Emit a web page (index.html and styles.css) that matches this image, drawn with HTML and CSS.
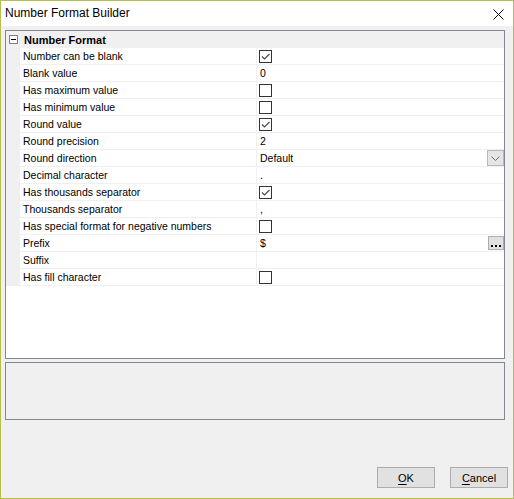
FILE: index.html
```html
<!DOCTYPE html>
<html>
<head>
<meta charset="utf-8">
<link rel="stylesheet" href="styles.css">
</head>
<body>
<div class="window">
  <div class="titlebar">
    <span class="title">Number Format Builder</span>
    <svg class="close" width="11" height="11" viewBox="0 0 11 11"><path d="M0.5 0.5 L10.5 10.5 M10.5 0.5 L0.5 10.5" stroke="#000" stroke-width="1" fill="none"/></svg>
  </div>
  <div class="grid">
    <div class="category">
      <span class="toggle"><span class="minus"></span></span>
      <span class="cat-label">Number Format</span>
    </div>
    <div class="row"><div class="gutter"></div><div class="name">Number can be blank</div><div class="value"><span class="check on"><svg width="11" height="11" viewBox="0 0 11 11"><path d="M2 5.5 L4.5 8 L9.5 3" stroke="#4a4a4a" stroke-width="1.2" fill="none"/></svg></span></div></div>
    <div class="row"><div class="gutter"></div><div class="name">Blank value</div><div class="value"><span class="text">0</span></div></div>
    <div class="row"><div class="gutter"></div><div class="name">Has maximum value</div><div class="value"><span class="check"></span></div></div>
    <div class="row"><div class="gutter"></div><div class="name">Has minimum value</div><div class="value"><span class="check"></span></div></div>
    <div class="row"><div class="gutter"></div><div class="name">Round value</div><div class="value"><span class="check on"><svg width="11" height="11" viewBox="0 0 11 11"><path d="M2 5.5 L4.5 8 L9.5 3" stroke="#4a4a4a" stroke-width="1.2" fill="none"/></svg></span></div></div>
    <div class="row"><div class="gutter"></div><div class="name">Round precision</div><div class="value"><span class="text">2</span></div></div>
    <div class="row"><div class="gutter"></div><div class="name">Round direction</div><div class="value"><span class="text">Default</span><span class="dropbtn"><svg width="9" height="5" viewBox="0 0 9 5"><path d="M0.5 0.5 L4.5 4.5 L8.5 0.5" stroke="#6d6d6d" stroke-width="1" fill="none"/></svg></span></div></div>
    <div class="row"><div class="gutter"></div><div class="name">Decimal character</div><div class="value"><span class="text">.</span></div></div>
    <div class="row"><div class="gutter"></div><div class="name">Has thousands separator</div><div class="value"><span class="check on"><svg width="11" height="11" viewBox="0 0 11 11"><path d="M2 5.5 L4.5 8 L9.5 3" stroke="#4a4a4a" stroke-width="1.2" fill="none"/></svg></span></div></div>
    <div class="row"><div class="gutter"></div><div class="name">Thousands separator</div><div class="value"><span class="text">,</span></div></div>
    <div class="row"><div class="gutter"></div><div class="name">Has special format for negative numbers</div><div class="value"><span class="check"></span></div></div>
    <div class="row"><div class="gutter"></div><div class="name">Prefix</div><div class="value"><span class="text">$</span><span class="ellbtn"><svg width="10" height="2" viewBox="0 0 10 2"><rect x="0" y="0" width="2" height="2" fill="#000"/><rect x="4" y="0" width="2" height="2" fill="#000"/><rect x="8" y="0" width="2" height="2" fill="#000"/></svg></span></div></div>
    <div class="row"><div class="gutter"></div><div class="name">Suffix</div><div class="value"></div></div>
    <div class="row"><div class="gutter"></div><div class="name">Has fill character</div><div class="value"><span class="check"></span></div></div>
  </div>
  <div class="help"></div>
  <div class="buttons">
    <button class="btn"><u>O</u>K</button>
    <button class="btn"><u>C</u>ancel</button>
  </div>
</div>
</body>
</html>
```
FILE: styles.css
```css
html, body {
  margin: 0;
  padding: 0;
  background: #f0f0f0;
}
.window {
  width: 514px;
  height: 499px;
  box-sizing: border-box;
  border: 1px solid #b4c04a;
  background: #f0f0f0;
  display: flex;
  flex-direction: column;
  font-family: "Liberation Sans", Arial, sans-serif;
  font-size: 10.5px;
  color: #000;
}
.titlebar {
  height: 25px;
  background: #fff;
  display: flex;
  align-items: center;
  justify-content: space-between;
  padding-left: 4px;
  padding-right: 9px;
  flex-shrink: 0;
}
.title {
  font-size: 12px;
  padding-bottom: 1px;
}
.close {
  display: block;
  margin-top: 2px;
}
.grid {
  margin: 4px 0 0 4px;
  width: 500px;
  height: 329px;
  box-sizing: border-box;
  border: 1px solid #828790;
  background: #fff;
  flex-shrink: 0;
}
.category {
  height: 17px;
  background: #f0f0f0;
  display: flex;
  align-items: flex-start;
}
.toggle {
  width: 9px;
  height: 9px;
  box-sizing: border-box;
  border: 1px solid #808080;
  background: #fff;
  margin: 4px 0 0 3px;
  position: relative;
}
.minus {
  position: absolute;
  left: 1px;
  top: 3px;
  width: 5px;
  height: 1px;
  background: #000;
}
.cat-label {
  font-weight: bold;
  font-size: 11px;
  margin-left: 6px;
  line-height: 16px;
  padding-top: 1px;
}
.row {
  display: grid;
  grid-template-columns: 14px 237px 247px;
  height: 17px;
}
.gutter {
  background: #f0f0f0;
}
.name {
  border-right: 1px solid #f0f0f0;
  border-bottom: 1px solid #f0f0f0;
  padding-left: 3px;
  line-height: 16px;
  white-space: nowrap;
}
.value {
  border-bottom: 1px solid #f0f0f0;
  display: flex;
  align-items: flex-start;
}
.text {
  padding-left: 3px;
  line-height: 16px;
}
.check {
  width: 13px;
  height: 13px;
  box-sizing: border-box;
  border: 1px solid #333;
  background: #fff;
  margin: 2px 0 0 2px;
  display: flex;
  align-items: center;
  justify-content: center;
}
.check svg {
  display: block;
}
.dropbtn {
  margin-left: auto;
  width: 17px;
  height: 16px;
  box-sizing: border-box;
  border: 1px solid #b9b9b9;
  background: #e5e5e5;
  display: flex;
  align-items: center;
  justify-content: center;
}
.dropbtn svg {
  display: block;
  margin-top: 1px;
}
.ellbtn {
  margin-left: auto;
  margin-top: 1px;
  width: 16px;
  height: 14px;
  box-sizing: border-box;
  border: 1px solid #adadad;
  background: #e1e1e1;
  display: flex;
  align-items: flex-end;
  justify-content: center;
  padding-bottom: 2px;
}
.ellbtn svg {
  display: block;
}
.help {
  margin: 3px 0 0 4px;
  width: 500px;
  height: 58px;
  box-sizing: border-box;
  border: 1px solid #828790;
  background: #f0f0f0;
  flex-shrink: 0;
}
.buttons {
  margin-top: 47px;
  display: flex;
  justify-content: flex-end;
  gap: 15px;
  padding-right: 5px;
}
.btn {
  width: 58px;
  height: 21px;
  box-sizing: border-box;
  border: 1px solid #adadad;
  background: #e1e1e1;
  font-family: "Liberation Sans", Arial, sans-serif;
  font-size: 11px;
  color: #000;
  padding: 0;
  margin: 0;
}
.btn u {
  text-decoration-thickness: 1px;
  text-underline-offset: 2px;
}
```
